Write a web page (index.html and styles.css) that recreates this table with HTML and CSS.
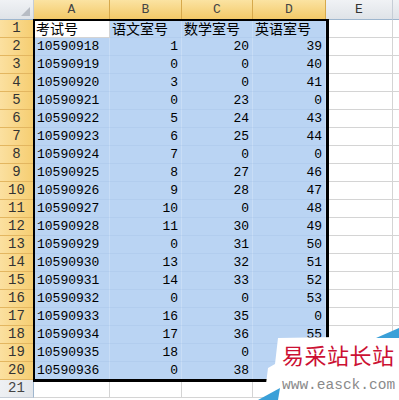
FILE: index.html
```html
<!DOCTYPE html>
<html>
<head>
<meta charset="utf-8">
<link rel="stylesheet" href="styles.css">
</head>
<body>
<div class="wrap">
<table class="sheet">
<colgroup>
<col class="w-rh"><col class="w-a"><col class="w-b"><col class="w-c"><col class="w-d"><col class="w-e"><col class="w-f">
</colgroup>
<tr class="hdr">
<th class="corner"><span class="tri"></span></th>
<th class="ch sel">A</th><th class="ch sel">B</th><th class="ch sel">C</th><th class="ch sel">D</th><th class="ch">E</th><th class="ch"></th>
</tr>
<tr><th class="rh sel">1</th><td class="cjk act">考试号</td><td class="cjk s">语文室号</td><td class="cjk s">数学室号</td><td class="cjk s">英语室号</td><td></td><td></td></tr>
<tr><th class="rh sel">2</th><td class="s id">10590918</td><td class="s n">1</td><td class="s n">20</td><td class="s n">39</td><td></td><td></td></tr>
<tr><th class="rh sel">3</th><td class="s id">10590919</td><td class="s n">0</td><td class="s n">0</td><td class="s n">40</td><td></td><td></td></tr>
<tr><th class="rh sel">4</th><td class="s id">10590920</td><td class="s n">3</td><td class="s n">0</td><td class="s n">41</td><td></td><td></td></tr>
<tr><th class="rh sel">5</th><td class="s id">10590921</td><td class="s n">0</td><td class="s n">23</td><td class="s n">0</td><td></td><td></td></tr>
<tr><th class="rh sel">6</th><td class="s id">10590922</td><td class="s n">5</td><td class="s n">24</td><td class="s n">43</td><td></td><td></td></tr>
<tr><th class="rh sel">7</th><td class="s id">10590923</td><td class="s n">6</td><td class="s n">25</td><td class="s n">44</td><td></td><td></td></tr>
<tr><th class="rh sel">8</th><td class="s id">10590924</td><td class="s n">7</td><td class="s n">0</td><td class="s n">0</td><td></td><td></td></tr>
<tr><th class="rh sel">9</th><td class="s id">10590925</td><td class="s n">8</td><td class="s n">27</td><td class="s n">46</td><td></td><td></td></tr>
<tr><th class="rh sel">10</th><td class="s id">10590926</td><td class="s n">9</td><td class="s n">28</td><td class="s n">47</td><td></td><td></td></tr>
<tr><th class="rh sel">11</th><td class="s id">10590927</td><td class="s n">10</td><td class="s n">0</td><td class="s n">48</td><td></td><td></td></tr>
<tr><th class="rh sel">12</th><td class="s id">10590928</td><td class="s n">11</td><td class="s n">30</td><td class="s n">49</td><td></td><td></td></tr>
<tr><th class="rh sel">13</th><td class="s id">10590929</td><td class="s n">0</td><td class="s n">31</td><td class="s n">50</td><td></td><td></td></tr>
<tr><th class="rh sel">14</th><td class="s id">10590930</td><td class="s n">13</td><td class="s n">32</td><td class="s n">51</td><td></td><td></td></tr>
<tr><th class="rh sel">15</th><td class="s id">10590931</td><td class="s n">14</td><td class="s n">33</td><td class="s n">52</td><td></td><td></td></tr>
<tr><th class="rh sel">16</th><td class="s id">10590932</td><td class="s n">0</td><td class="s n">0</td><td class="s n">53</td><td></td><td></td></tr>
<tr><th class="rh sel">17</th><td class="s id">10590933</td><td class="s n">16</td><td class="s n">35</td><td class="s n">0</td><td></td><td></td></tr>
<tr><th class="rh sel">18</th><td class="s id">10590934</td><td class="s n">17</td><td class="s n">36</td><td class="s n">55</td><td></td><td></td></tr>
<tr><th class="rh sel">19</th><td class="s id">10590935</td><td class="s n">18</td><td class="s n">0</td><td class="s n"></td><td></td><td></td></tr>
<tr><th class="rh sel">20</th><td class="s id">10590936</td><td class="s n">0</td><td class="s n">38</td><td class="s n"></td><td></td><td></td></tr>
<tr><th class="rh">21</th><td></td><td></td><td></td><td></td><td></td><td></td></tr>
</table>
<div class="selbox"></div>
<div class="mark">
<svg class="markbg" width="141" height="72" viewBox="0 0 141 72">
<polygon points="20,10 141,8 141,72 6,72 10,40 17,36" fill="#ffffff"/>
<polygon points="0,72 22,60 20,72" fill="#3aa0d8"/>
<polygon points="118,10 141,0 141,10" fill="#3aa0d8"/>
</svg>
<div class="mark-cn">易采站长站</div>
<div class="mark-en">www.easck.com</div>
</div>
</div>
</body>
</html>
```
FILE: styles.css
```css
html, body {
  margin: 0;
  padding: 0;
  background: #ffffff;
  overflow: hidden;
}
.wrap {
  position: relative;
  width: 399px;
  height: 400px;
  overflow: hidden;
}
.sheet {
  border-collapse: separate;
  border-spacing: 0;
  table-layout: fixed;
  width: 420px;
  font-family: "Liberation Mono", monospace;
  font-size: 13px;
  color: #000;
}
.w-rh { width: 34px; }
.w-a { width: 76px; }
.w-b { width: 72px; }
.w-c { width: 71px; }
.w-d { width: 73px; }
.w-e { width: 67px; }
.w-f { width: 27px; }
.sheet td, .sheet th {
  box-sizing: border-box;
  height: 18px;
  padding: 0 3px;
  border-right: 1px solid #d4d4d4;
  border-bottom: 1px solid #d4d4d4;
  white-space: nowrap;
  overflow: hidden;
  line-height: 17px;
}
.hdr th {
  height: 20px;
  line-height: 19px;
  font-weight: normal;
  background: linear-gradient(#f0f2f5, #dfe3e8);
  border-right: 1px solid #c6cdd6;
  border-bottom: 1px solid #9eb6ce;
  color: #333;
  text-align: center;
  padding: 0;
}
.hdr th.sel {
  background: linear-gradient(#fbe3a2, #f3c968);
  border-right: 1px solid #d6a94c;
  border-bottom: 1px solid #c99a3e;
  color: #444;
}
.corner {
  position: relative;
}
.tri {
  position: absolute;
  right: 3px;
  bottom: 3px;
  width: 0;
  height: 0;
  border-left: 9px solid transparent;
  border-bottom: 9px solid #b7bcc4;
}
.rh {
  font-weight: normal;
  text-align: center;
  padding: 0;
  background: linear-gradient(90deg, #eef0f3, #e2e6eb);
  border-right: 1px solid #9eb6ce !important;
  border-bottom: 1px solid #c6cdd6 !important;
  color: #444;
  font-size: 14px;
}
.rh.sel {
  background: linear-gradient(90deg, #fbe0a0, #f6ce72);
  border-right: 1px solid #c99a3e !important;
  border-bottom: 1px solid #e3b660 !important;
  color: #333;
}
.s {
  background: #bad4f3;
  border-right-color: #c8ddf6 !important;
  border-bottom-color: #b2cdee !important;
}
.act {
  background: #ffffff;
}
.sheet td.cjk {
  font-family: "Noto Sans CJK SC", sans-serif;
  font-size: 14px;
  line-height: 17px;
  overflow: visible;
  padding-left: 2px;
}
.id {
  padding-left: 10px;
}
.n {
  text-align: right;
  padding-right: 4px;
}
.selbox {
  position: absolute;
  left: 33px;
  top: 19px;
  width: 291px;
  height: 358px;
  border-left: 2px solid #000;
  border-top: 2px solid #000;
  border-right: 3px solid #000;
  border-bottom: 3px solid #000;
  pointer-events: none;
}
.mark {
  position: absolute;
  left: 258px;
  top: 328px;
  width: 141px;
  height: 72px;
}
.markbg {
  position: absolute;
  left: 0;
  top: 0;
}
.mark-cn {
  position: absolute;
  left: 24px;
  top: 12px;
  font-family: "Noto Sans CJK SC", sans-serif;
  font-size: 22px;
  line-height: 28px;
  color: #cc1133;
  letter-spacing: 0.5px;
  white-space: nowrap;
}
.mark-en {
  position: absolute;
  left: 24px;
  top: 48px;
  font-family: "Liberation Mono", monospace;
  font-size: 14.5px;
  line-height: 18px;
  color: #8a8a8a;
  white-space: nowrap;
}
```
